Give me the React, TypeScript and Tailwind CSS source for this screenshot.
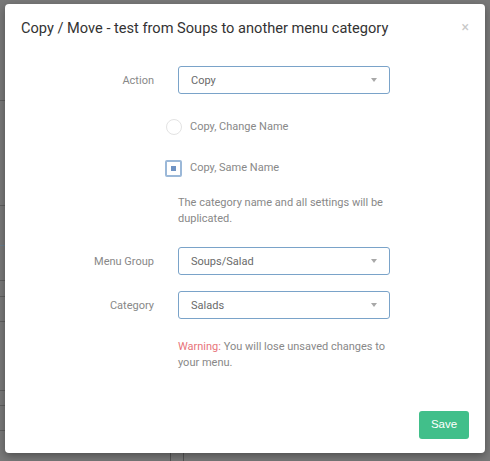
import React, { useState } from 'react';

const font = { fontFamily: 'Roboto, "Liberation Sans", sans-serif' };

const Caret: React.FC = () => (
    <svg width="6" height="4" viewBox="0 0 6 4">
        <path d="M0 0 L6 0 L3 4 Z" fill="#a8a8a8" />
    </svg>
);

interface SelectBoxProps {
    value: string;
}

const SelectBox: React.FC<SelectBoxProps> = ({ value }) => (
    <div className="w-[212px] h-[28px] border border-[#7aa3c9] rounded-[3px] bg-white flex items-center justify-between pl-[12px] pr-[12px]">
        <span className="text-[11px] text-[#6a6a6a] pt-[2px]">{value}</span>
        <Caret />
    </div>
);

interface RowProps {
    label?: string;
    children: React.ReactNode;
    className?: string;
}

const Row: React.FC<RowProps> = ({ label, children, className }) => (
    <div className={`flex items-center ${className ?? ''}`}>
        <div className="w-[149px] text-right text-[11px] text-[#888] pt-[2px]">{label}</div>
        <div className="ml-[24px]">{children}</div>
    </div>
);

const App: React.FC = () => {
    const [mode, setMode] = useState<'change' | 'same'>('same');

    return (
        <div className="relative w-[490px] h-[461px] bg-[#797979] overflow-hidden" style={font}>
            {/* underlying table lines peeking out */}
            <div className="absolute left-0 top-[100px] w-[5px] h-px bg-[#5f5f5f]" />
            <div className="absolute left-0 top-[205px] w-[5px] h-px bg-[#5f5f5f]" />
            <div className="absolute left-0 top-[245px] w-[5px] h-px bg-[#6a7f8f]" />
            <div className="absolute left-0 top-[280px] w-[5px] h-px bg-[#5f5f5f]" />
            <div className="absolute left-0 top-[296px] w-[5px] h-px bg-[#5f5f5f]" />
            <div className="absolute left-0 top-[321px] w-[5px] h-px bg-[#5f5f5f]" />
            <div className="absolute left-0 top-[390px] w-[5px] h-px bg-[#5f5f5f]" />
            <div className="absolute left-0 top-[405px] w-[5px] h-px bg-[#5f5f5f]" />
            <div className="absolute left-0 top-[430px] w-[5px] h-px bg-[#5f5f5f]" />
            <div className="absolute left-[170px] top-[452px] w-px h-[9px] bg-[#555]" />
            <div className="absolute left-[183px] top-[452px] w-px h-[9px] bg-[#555]" />

            <div className="absolute left-[5px] top-[4px] w-[480px] h-[449px] bg-white rounded-[4px] shadow-[0_3px_9px_rgba(0,0,0,0.35)] flex flex-col">
                <div className="flex items-center justify-between pl-[16px] pr-[16px] h-[48px]">
                    <h4 className="text-[14.6px] text-[#333] font-normal pt-[1px]">Copy / Move - test from Soups to another menu category</h4>
                    <button className="text-[#c8c8c8] text-[14px] leading-none -mt-[3px]">×</button>
                </div>

                <div className="flex flex-col pt-[14px]">
                    <Row label="Action">
                        <SelectBox value="Copy" />
                    </Row>

                    <button
                        onClick={() => setMode('change')}
                        className="flex items-center ml-[161px] mt-[23px] h-[20px]"
                    >
                        <span className={`w-[16px] h-[16px] rounded-full border ${mode === 'change' ? 'border-[#7aa3c9]' : 'border-[#e3e3e3]'} flex items-center justify-center`}>
                            {mode === 'change' && <span className="w-[6px] h-[6px] bg-[#7aa3c9] rounded-full" />}
                        </span>
                        <span className="ml-[8px] text-[11px] text-[#888]">Copy, Change Name</span>
                    </button>

                    <button
                        onClick={() => setMode('same')}
                        className="flex items-center ml-[160px] mt-[21px] h-[20px]"
                    >
                        <span className={`w-[17px] h-[17px] rounded-[2px] border-2 ${mode === 'same' ? 'border-[#9bb8d8]' : 'border-[#e3e3e3]'} flex items-center justify-center`}>
                            {mode === 'same' && <span className="w-[5px] h-[5px] bg-[#6f93c4]" />}
                        </span>
                        <span className="ml-[8px] text-[11px] text-[#888]">Copy, Same Name</span>
                    </button>

                    <p className="ml-[173px] mt-[17px] w-[215px] text-[11px] leading-[16px] text-[#888]">
                        The category name and all settings will be duplicated.
                    </p>

                    <Row label="Menu Group" className="mt-[20px]">
                        <SelectBox value="Soups/Salad" />
                    </Row>
                    <Row label="Category" className="mt-[16px]">
                        <SelectBox value="Salads" />
                    </Row>

                    <p className="ml-[173px] mt-[20px] w-[215px] text-[11px] leading-[16px] text-[#888]">
                        <span className="text-[#e8747a]">Warning:</span> You will lose unsaved changes to your menu.
                    </p>
                </div>

                <div className="mt-auto flex justify-end pr-[16px] pb-[14px]">
                    <button className="w-[50px] h-[28px] rounded-[3px] bg-[#41bf8a] text-white text-[11.5px]" style={{ fontFamily: '"Liberation Sans", Arial, sans-serif' }}>
                        Save
                    </button>
                </div>
            </div>
        </div>
    );
};

export default App;
